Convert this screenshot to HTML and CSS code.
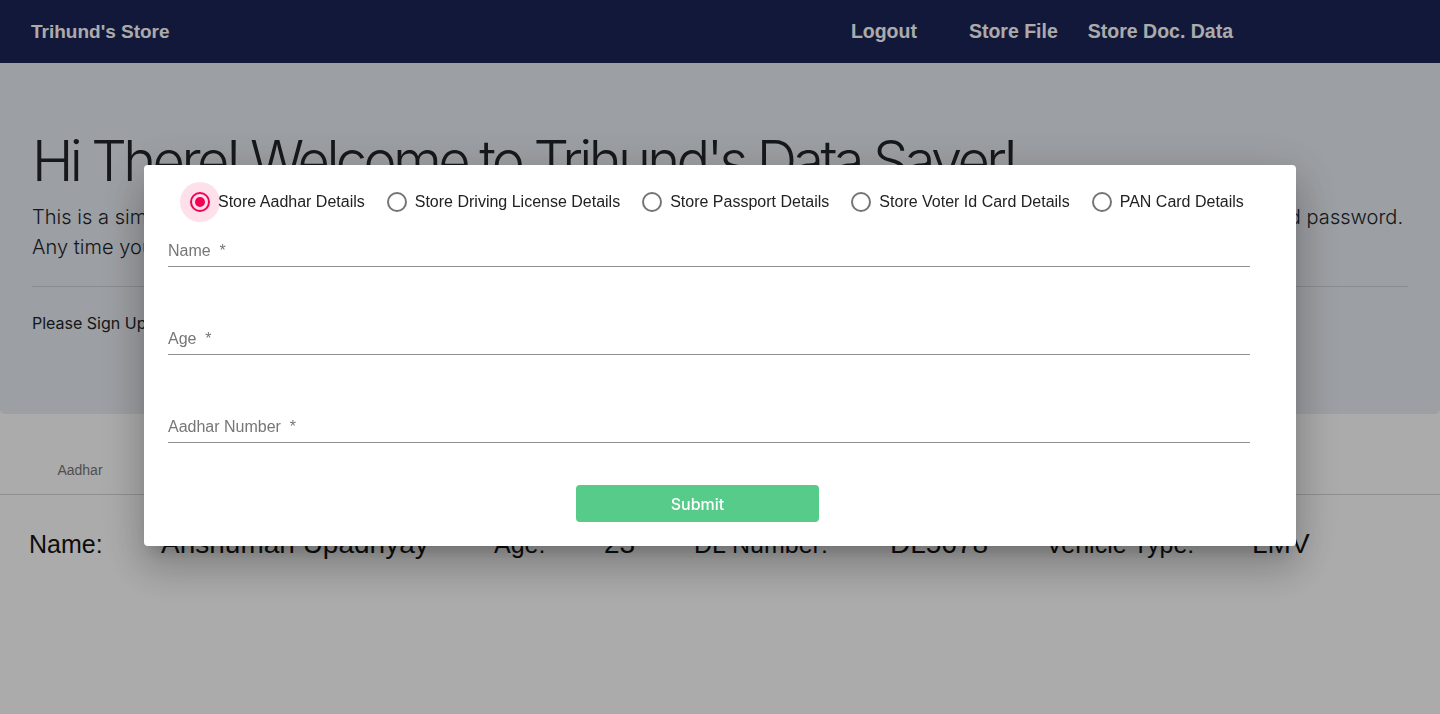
FILE: index.html
```html
<!DOCTYPE html>
<html lang="en">
<head>
<meta charset="utf-8">
<title>Trihund's Store</title>
<link rel="stylesheet" href="styles.css">
</head>
<body>
<nav class="navbar">
  <a class="brand" href="#">Trihund's Store</a>
  <div class="nav-links">
    <a class="nav-link logout" href="#">Logout</a>
    <a class="nav-link store-file" href="#">Store File</a>
    <a class="nav-link" href="#">Store Doc. Data</a>
  </div>
</nav>

<section class="jumbotron">
  <h1 class="display">Hi There! Welcome to Trihund's Data Saver!</h1>
  <p class="lead">
    <span class="lead-line">This is a simple app where you can safely keep all your important documents and their details. To use it, just sign up with your email and password.</span>
    <span class="lead-line">Any time you can log in and look at your stored documents from anywhere.</span>
  </p>
  <hr class="divider">
  <p class="signup-text">Please Sign Up to start storing your documents.</p>
</section>

<main class="records">
  <div class="tabs">
    <div class="tab">Aadhar</div>
    <div class="tab tab-active">Driving License</div>
    <div class="tab">Passport</div>
    <div class="tab">Voter Id</div>
    <div class="tab">PAN Card</div>
  </div>
  <div class="record">
    <span class="rec-label c1">Name:</span>
    <span class="rec-value c2">Anshuman Upadhyay</span>
    <span class="rec-label c3">Age:</span>
    <span class="rec-value c4">23</span>
    <span class="rec-label c5">DL Number:</span>
    <span class="rec-value c6">DL5678</span>
    <span class="rec-label c7">Vehicle Type:</span>
    <span class="rec-value">LMV</span>
  </div>
</main>

<div class="backdrop"></div>

<div class="modal">
  <div class="radio-group">
    <label class="option checked"><span class="radio"><span class="halo"></span></span><span class="opt-text">Store Aadhar Details</span></label>
    <label class="option"><span class="radio"></span><span class="opt-text">Store Driving License Details</span></label>
    <label class="option"><span class="radio"></span><span class="opt-text">Store Passport Details</span></label>
    <label class="option"><span class="radio"></span><span class="opt-text">Store Voter Id Card Details</span></label>
    <label class="option"><span class="radio"></span><span class="opt-text">PAN Card Details</span></label>
  </div>
  <form class="form">
    <div class="field first"><span class="field-label">Name&nbsp; *</span></div>
    <div class="field"><span class="field-label">Age&nbsp; *</span></div>
    <div class="field"><span class="field-label">Aadhar Number&nbsp; *</span></div>
    <button type="button" class="submit">Submit</button>
  </form>
</div>
</body>
</html>
```

FILE: styles.css
```css
* { box-sizing: border-box; }

html, body {
  margin: 0;
  padding: 0;
  background: #ffffff;
  height: 714px;
  overflow: hidden;
}

body {
  font-family: Inter, "Liberation Sans", sans-serif;
  color: #212529;
}

/* Navbar */
.navbar {
  height: 63px;
  background: #1b2455;
  display: flex;
  align-items: center;
  padding: 0 207px 0 31px;
}

.brand {
  font-family: "Liberation Sans", Arial, sans-serif;
  font-weight: 700;
  font-size: 19px;
  color: #ffffff;
  text-decoration: none;
}

.nav-links {
  margin-left: auto;
  display: flex;
  align-items: center;
}

.nav-link {
  font-family: "Liberation Sans", Arial, sans-serif;
  font-weight: 700;
  font-size: 19.5px;
  color: #ffffff;
  text-decoration: none;
}

.logout { margin-right: 52px; }
.store-file { margin-right: 30px; }

/* Jumbotron */
.jumbotron {
  background: #e9edf3;
  padding: 64px 32px 63px;
  border-radius: 0 0 5px 5px;
}

.display {
  font-family: Inter, "Liberation Sans", sans-serif;
  font-weight: 300;
  font-size: 56px;
  line-height: 68px;
  margin: 0 0 7px;
  letter-spacing: -3.65px;
  white-space: nowrap;
}

.lead {
  font-weight: 300;
  font-size: 20px;
  line-height: 30px;
  margin: 0 0 16px;
  letter-spacing: 0.04px;
}

.lead-line {
  display: block;
  white-space: nowrap;
}

.divider {
  border: 0;
  border-top: 1px solid rgba(0, 0, 0, 0.12);
  margin: 24px 0;
}

.signup-text {
  font-size: 16px;
  line-height: 24px;
  margin: 0 0 16px;
}

/* Records */
.records {
  height: 298px;
  border-bottom: 2px solid rgba(0, 0, 0, 0.1);
}

.tabs {
  margin-top: 32px;
  display: flex;
  border-bottom: 1px solid rgba(0, 0, 0, 0.16);
}

.tab {
  width: 160px;
  height: 48px;
  display: flex;
  align-items: center;
  justify-content: center;
  font-family: "Liberation Sans", Arial, sans-serif;
  font-size: 14px;
  color: #777777;
}

.tab-active {
  color: #1b2455;
  box-shadow: inset 0 -2px 0 #1b2455;
}

.record {
  display: flex;
  align-items: baseline;
  padding: 33px 0 0 29px;
  font-family: "Liberation Sans", Arial, sans-serif;
  color: #141414;
}

.rec-label { font-size: 25px; }
.rec-value { font-size: 28px; }

.c1 { width: 132px; }
.c2 { width: 333px; }
.c3 { width: 110px; }
.c4 { width: 90px; }
.c5 { width: 196px; }
.c6 { width: 156px; }
.c7 { width: 206px; }

/* Backdrop & modal */
.backdrop {
  position: fixed;
  inset: 0;
  background: rgba(0, 0, 0, 0.33);
}

.modal {
  position: fixed;
  left: 144px;
  top: 165px;
  width: 1152px;
  height: 381px;
  background: #ffffff;
  border-radius: 4px;
  box-shadow: 0 11px 15px -7px rgba(0, 0, 0, 0.2), 0 24px 38px 3px rgba(0, 0, 0, 0.14), 0 9px 46px 8px rgba(0, 0, 0, 0.12);
  padding: 27px 46px 25px 24px;
  font-family: "Liberation Sans", Arial, sans-serif;
}

.radio-group {
  display: flex;
  align-items: center;
  padding-left: 22px;
  height: 20px;
}

.option {
  display: flex;
  align-items: center;
  flex: none;
  margin-right: 22px;
  cursor: pointer;
}

.radio {
  position: relative;
  width: 20px;
  height: 20px;
  border-radius: 50%;
  border: 2px solid #757575;
  flex: none;
}

.option.checked .radio {
  border-color: #f50057;
}

.option.checked .radio::after {
  content: "";
  position: absolute;
  left: 3px;
  top: 3px;
  width: 10px;
  height: 10px;
  border-radius: 50%;
  background: #f50057;
}

.halo {
  position: absolute;
  left: -12px;
  top: -12px;
  width: 40px;
  height: 40px;
  border-radius: 50%;
  background: rgba(245, 0, 87, 0.12);
}

.opt-text {
  margin-left: 8px;
  font-size: 16px;
  line-height: 20px;
  color: #222222;
  white-space: nowrap;
}

.form {
  display: flex;
  flex-direction: column;
}

.field {
  margin-top: 62px;
  padding-bottom: 5px;
  border-bottom: 1px solid #8f8f8f;
}

.field.first { margin-top: 29px; }

.field-label {
  display: block;
  font-size: 16px;
  line-height: 20px;
  color: #767676;
}

.submit {
  align-self: flex-start;
  margin: 42px 0 0 408px;
  width: 243px;
  height: 37px;
  border: 0;
  border-radius: 4px;
  background: #57cc8a;
  color: #ffffff;
  font-family: Inter, "Liberation Sans", sans-serif;
  font-weight: 500;
  font-size: 16px;
  cursor: pointer;
}
```
